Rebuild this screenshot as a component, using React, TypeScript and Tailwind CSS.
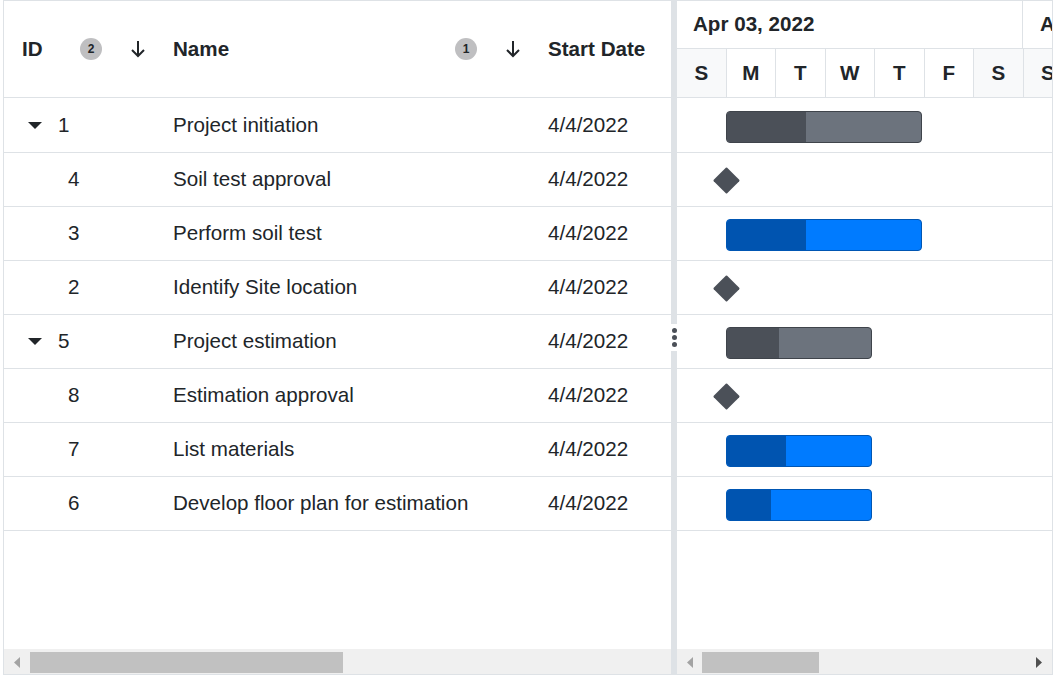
import React from "react";

type Row = {
  id: number;
  name: string;
  parent?: boolean;
  kind: "parent" | "milestone" | "task";
  width?: number;
  progress?: number;
};

const rows: Row[] = [
  { id: 1, name: "Project initiation", parent: true, kind: "parent", width: 196, progress: 80 },
  { id: 4, name: "Soil test approval", kind: "milestone" },
  { id: 3, name: "Perform soil test", kind: "task", width: 196, progress: 80 },
  { id: 2, name: "Identify Site location", kind: "milestone" },
  { id: 5, name: "Project estimation", parent: true, kind: "parent", width: 146, progress: 53 },
  { id: 8, name: "Estimation approval", kind: "milestone" },
  { id: 7, name: "List materials", kind: "task", width: 146, progress: 60 },
  { id: 6, name: "Develop floor plan for estimation", kind: "task", width: 146, progress: 45 },
];

const days = [
  { d: "S", weekend: true },
  { d: "M" },
  { d: "T" },
  { d: "W" },
  { d: "T" },
  { d: "F" },
  { d: "S", weekend: true },
  { d: "S", weekend: true },
];

function SortArrow() {
  return (
    <svg width="16" height="20" viewBox="0 0 16 20" className="mr-[9px] shrink-0">
      <path d="M8 2 V17 M2 11 L8 17 L14 11" fill="none" stroke="#212529" strokeWidth="2" />
    </svg>
  );
}

function Badge({ n }: { n: number }) {
  return (
    <span className="mr-[28px] flex h-[22px] w-[22px] shrink-0 items-center justify-center rounded-full bg-[#bfbfc1] text-[12px] font-bold text-[#212529]">
      {n}
    </span>
  );
}

function Caret() {
  return (
    <span className="flex w-[26px] justify-center">
      <svg width="14" height="8" viewBox="0 0 14 8">
        <path d="M0 0 H14 L7 7 Z" fill="#212529" />
      </svg>
    </span>
  );
}

function Bar({ row }: { row: Row }) {
  if (row.kind === "milestone") {
    return (
      <div className="absolute left-[40px] top-[18px] h-[19px] w-[19px] rotate-45 rounded-[1px] bg-[#4b5058]" />
    );
  }
  const gray = row.kind === "parent";
  return (
    <div
      className={
        "absolute left-[49px] top-[12px] flex h-[32px] overflow-hidden rounded-[4px] border " +
        (gray ? "border-[#3f444b] bg-[#6c737d]" : "border-[#0056b3] bg-[#007bff]")
      }
      style={{ width: row.width }}
    >
      <div
        className={gray ? "h-full bg-[#4b5058]" : "h-full bg-[#0054b0]"}
        style={{ width: (row.progress ?? 0) - 1 }}
      />
    </div>
  );
}

export default function App() {
  return (
    <div className="h-[681px] w-[1058px] bg-white font-['Liberation_Sans',Arial,sans-serif] text-[#212529]">
      <div className="ml-[3px] flex h-[675px] w-[1050px] border border-[#dee2e6]">
        {/* grid side */}
        <div className="flex w-[667px] shrink-0 flex-col">
          <div className="flex h-[97px] shrink-0 border-b border-[#dee2e6] text-[20.6px] font-bold">
            <div className="flex w-[151px] items-center pl-[18px]">
              <span className="flex-1">ID</span>
              <Badge n={2} />
              <SortArrow />
            </div>
            <div className="flex w-[375px] items-center pl-[18px]">
              <span className="flex-1">Name</span>
              <Badge n={1} />
              <SortArrow />
            </div>
            <div className="flex flex-1 items-center overflow-hidden whitespace-nowrap pl-[18px]">
              Start Date
            </div>
          </div>
          <div className="flex-1 pt-[1px]">
            {rows.map((r) => (
              <div key={r.id} className="flex h-[54px] border-b border-[#dee2e6] text-[20.6px]">
                <div className="flex w-[151px] items-center pl-[18px]">
                  {r.parent ? (
                    <>
                      <Caret />
                      <span className="ml-[10px]">{r.id}</span>
                    </>
                  ) : (
                    <span className="ml-[46px]">{r.id}</span>
                  )}
                </div>
                <div className="flex w-[375px] items-center whitespace-nowrap pl-[18px]">{r.name}</div>
                <div className="flex flex-1 items-center pl-[18px]">4/4/2022</div>
              </div>
            ))}
          </div>
          <div className="flex h-[25px] shrink-0 items-start bg-[#f0f0f0] pt-[3px]">
            <div className="flex h-[21px] w-[26px] items-center justify-center">
              <svg width="6" height="11" viewBox="0 0 6 11">
                <path d="M6 0 V11 L0 5.5 Z" fill="#a3a3a3" />
              </svg>
            </div>
            <div className="h-[21px] w-[313px] bg-[#c1c1c1]" />
          </div>
        </div>

        {/* splitter */}
        <div className="flex w-[6px] shrink-0 flex-col">
          <div className="flex-1 bg-[#dee2e6]" />
          <div className="flex h-[27px] flex-col items-center justify-center gap-[2px] bg-white">
            <span className="h-[5px] w-[5px] rounded-full bg-[#4b5058]" />
            <span className="h-[5px] w-[5px] rounded-full bg-[#4b5058]" />
            <span className="h-[5px] w-[5px] rounded-full bg-[#4b5058]" />
          </div>
          <div className="h-[323px] bg-[#dee2e6]" />
        </div>

        {/* chart side */}
        <div className="flex flex-1 flex-col overflow-hidden">
          <div className="h-[97px] shrink-0 border-b border-[#dee2e6] text-[20.6px] font-bold">
            <div className="flex h-[48px] border-b border-[#dee2e6]">
              <div className="flex w-[346px] shrink-0 items-center border-r border-[#dee2e6] pl-[16px]">
                Apr 03, 2022
              </div>
              <div className="flex shrink-0 items-center pl-[17px]">Apr 10, 2022</div>
            </div>
            <div className="flex h-[48px]">
              {days.map((d, i) => (
                <div
                  key={i}
                  className={
                    "flex h-full w-[49.5px] shrink-0 items-center justify-center border-r border-[#dee2e6] " +
                    (d.weekend ? "bg-[#f8f9fa]" : "bg-white")
                  }
                >
                  {d.d}
                </div>
              ))}
            </div>
          </div>
          <div className="flex-1 pt-[1px]">
            {rows.map((r) => (
              <div key={r.id} className="relative h-[54px] border-b border-[#dee2e6]">
                <Bar row={r} />
              </div>
            ))}
          </div>
          <div className="flex h-[25px] shrink-0 items-start bg-[#f0f0f0] pt-[3px]">
            <div className="flex h-[21px] w-[25px] items-center justify-center">
              <svg width="6" height="11" viewBox="0 0 6 11">
                <path d="M6 0 V11 L0 5.5 Z" fill="#a3a3a3" />
              </svg>
            </div>
            <div className="h-[21px] w-[117px] bg-[#c1c1c1]" />
            <div className="flex-1" />
            <div className="flex h-[21px] w-[26px] items-center justify-center">
              <svg width="6" height="11" viewBox="0 0 6 11">
                <path d="M0 0 V11 L6 5.5 Z" fill="#505050" />
              </svg>
            </div>
          </div>
        </div>
      </div>
    </div>
  );
}
